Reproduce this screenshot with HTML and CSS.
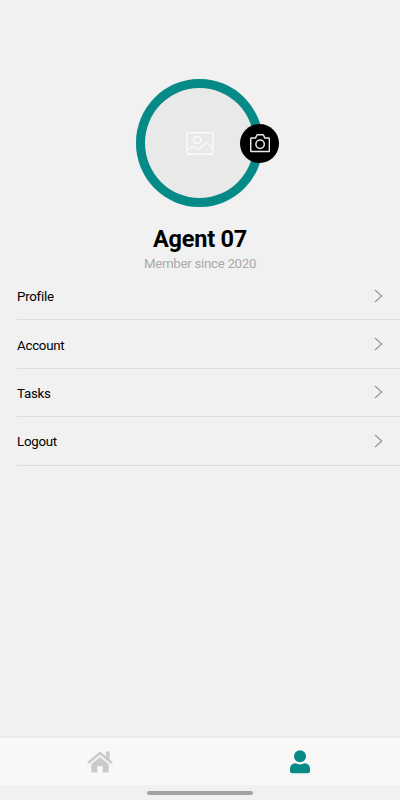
FILE: index.html
```html
<!DOCTYPE html>
<html lang="en">
<head>
<meta charset="utf-8">
<title>Profile</title>
<link rel="stylesheet" href="styles.css">
</head>
<body>
<div class="screen">
  <header class="header">
    <div class="avatar">
      <svg class="avatar-icon" viewBox="0 0 28 23"><rect x=".75" y=".75" width="26.5" height="21.2" rx="2"/><circle cx="11.3" cy="7.8" r="3.6"/><path d="M1 17.5l5-2.7q1.1-.4 2 .3l3.2 2.2q.9.5 1.7-.2l6.500-6.400q1.100-.900 2 .1l5.800 7"/></svg>
      <button class="camera" aria-label="Change photo">
        <svg viewBox="0 0 20 19"><path d="M1.500 4h4l1.200-2.500q.3-.7 1-.7h5q.7 0 1 .7L14.800 4h3.900q.7 0 .7.8v12q0 .8-.7.8H1.500q-.8 0-.8-.8v-12q0-.8.8-.8z"/><circle cx="10.1" cy="10.2" r="4.200"/></svg>
      </button>
    </div>
    <h1 class="name">Agent 07</h1>
    <p class="since">Member since 2020</p>
  </header>
  <main class="menu">
    <a class="row"><span>Profile</span><svg class="chevron" viewBox="0 0 9 14"><path d="M1 1l6.600 6L1 13"/></svg></a>
    <a class="row"><span>Account</span><svg class="chevron" viewBox="0 0 9 14"><path d="M1 1l6.600 6L1 13"/></svg></a>
    <a class="row"><span>Tasks</span><svg class="chevron" viewBox="0 0 9 14"><path d="M1 1l6.600 6L1 13"/></svg></a>
    <a class="row"><span>Logout</span><svg class="chevron" viewBox="0 0 9 14"><path d="M1 1l6.600 6L1 13"/></svg></a>
  </main>
  <nav class="tabs">
    <a class="tab"><svg class="home" viewBox="0 0 26 22"><path class="roof" d="M1 12L13 1.900l12 10.100"/><path d="M19 .5h3.600v8.500L19 6zM4.300 13.200L13 6l8.700 7.200V21.500h-6v-6.300h-5.300v6.300H4.300z"/></svg></a>
    <a class="tab"><svg class="person" viewBox="0 0 20 24"><circle cx="10" cy="6.200" r="6"/><path d="M5.200 13.300q4.800 2.200 9.600 0Q20 13.800 20 19v2.200q0 2.100-2.200 2.100H2.200Q0 23.300 0 21.200V19q0-5.200 5.200-5.700z"/></svg></a>
  </nav>
  <footer class="gesture"><div class="handle"></div></footer>
</div>
</body>
</html>
```
FILE: styles.css
```css
* { box-sizing: border-box; }
body {
  margin: 0;
  background: #f1f1f1;
  color: #000;
  font-family: Roboto, sans-serif;
}
.screen {
  display: flex;
  flex-direction: column;
  height: 800px;
}
.header {
  display: flex;
  flex-direction: column;
  align-items: center;
  height: 272px;
  padding-top: 79px;
}
.avatar {
  position: relative;
  display: flex;
  align-items: center;
  justify-content: center;
  flex: none;
  width: 127px;
  height: 128px;
  margin-right: 1px;
  border: 9px solid #068a87;
  border-radius: 50%;
  background: #e9e9e9;
  box-shadow: 0 0 1px #9ed4d2;
}
.avatar-icon {
  width: 28px;
  height: 23px;
  margin-left: 1px;
  fill: none;
  stroke: #fafafa;
  stroke-width: 1.5;
}
.camera {
  position: absolute;
  top: 35.5px;
  right: -25px;
  display: flex;
  align-items: center;
  justify-content: center;
  width: 39px;
  height: 39px;
  padding: 0;
  border: 0;
  border-radius: 50%;
  background: #000;
}
.camera svg {
  width: 20px;
  height: 19px;
  fill: none;
  stroke: #e9e9e9;
  stroke-width: 1.5;
}
.name {
  margin: 18px 0 0;
  font-size: 23.5px;
  line-height: 28px;
  font-weight: 700;
  letter-spacing: -0.25px;
}
.since {
  margin: 2px 0 0;
  color: #aaa;
  font-size: 13.3px;
  line-height: 17px;
  letter-spacing: -0.3px;
}
.menu {
  flex: 1;
  padding-left: 17px;
}
.row {
  display: flex;
  align-items: center;
  justify-content: space-between;
  height: 48.4px;
  padding-right: 17px;
  border-bottom: 1px solid #dedede;
  font-size: 13.3px;
  letter-spacing: -0.25px;
}
.row span {
  padding-top: 2px;
}
.chevron {
  width: 9px;
  height: 14px;
  fill: none;
  stroke: #a0a0a0;
  stroke-width: 1.5;
}
.tabs {
  display: flex;
  height: 49px;
  border-top: 2px solid #ececec;
  background: #f9f8f6;
}
.tab {
  display: flex;
  align-items: center;
  justify-content: center;
  flex: 1;
}
.home {
  width: 26px;
  height: 22px;
  fill: #cbcbcb;
}
.home .roof {
  fill: none;
  stroke: #cbcbcb;
  stroke-width: 2.7;
}
.person {
  width: 20px;
  height: 24px;
  fill: #068a87;
}
.gesture {
  display: flex;
  justify-content: center;
  height: 15px;
  padding-top: 6px;
}
.handle {
  width: 106px;
  height: 3.5px;
  border-radius: 2px;
  background: #a3a3a3;
}
```
